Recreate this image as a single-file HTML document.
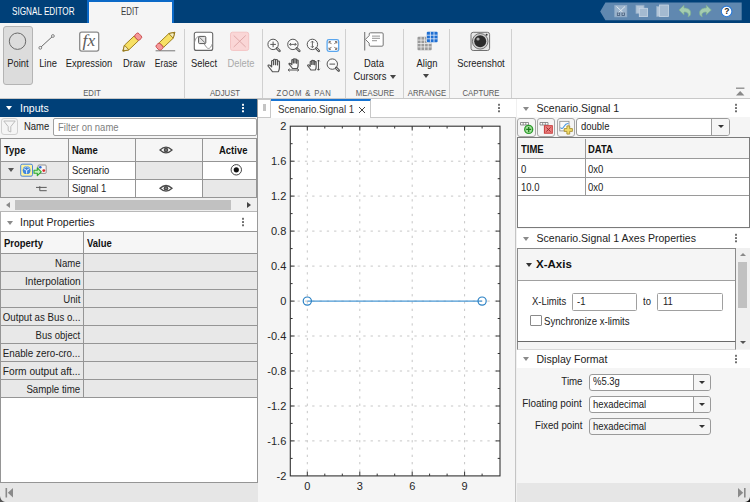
<!DOCTYPE html>
<html>
<head>
<meta charset="utf-8">
<title>Signal Editor</title>
<style>
*{box-sizing:border-box;margin:0;padding:0}
html,body{width:750px;height:502px;overflow:hidden;background:#f0f0f0}
body{font-family:"Liberation Sans",sans-serif;font-size:10px;color:#222;position:relative}
.a{position:absolute}
.t{position:absolute;white-space:nowrap;line-height:1}
/* title bar */
#titlebar{left:0;top:0;width:750px;height:22.5px;background:#004078}
#tab-se{left:12px;top:7px;font-size:10.4px;color:#fff;transform:scaleX(.785);transform-origin:left}
#tab-edit{left:86.8px;top:0;width:87px;height:23px;background:#f5f5f5;border:2.4px solid #0b69c7;border-bottom:none;border-right-width:2.8px}
#tab-edit span{left:32.6px;top:4.7px;font-size:10.4px;color:#3a3a3a;transform:scaleX(.755);transform-origin:left}
#toolstrip{left:0;top:22.5px;width:750px;height:76px;background:#f5f5f5;border-bottom:1px solid #c8c8c8}
.sep{position:absolute;top:29px;width:1px;height:68.5px;background:#d0d0d0}
.seclabel{position:absolute;top:88.6px;font-size:9px;color:#5a5a5a;white-space:nowrap;line-height:1;transform:translateX(-50%) scaleX(.86)}
.btnlabel{position:absolute;top:58.5px;font-size:10.3px;color:#222;white-space:nowrap;line-height:1;transform:translateX(-50%) scaleX(.91)}
/* panels */
.phdr{position:absolute;height:18px;background:#fff;font-size:11px;color:#222}
.phdr .ttl{position:absolute;left:20px;top:3px;white-space:nowrap;line-height:1}
.caret{position:absolute;width:0;height:0;border-left:3.5px solid transparent;border-right:3.5px solid transparent;border-top:4px solid #666}
.dots{position:absolute;width:2px;height:2px;border-radius:.5px;background:#555;box-shadow:0 4px 0 #555,0 -4px 0 #555}

.b{font-weight:bold;font-size:10.3px;color:#111}
.prow{left:0;width:255.5px;height:17.05px;background:#e8e8e8}
.prow:after{content:"";position:absolute;left:82px;top:0;width:1px;height:100%;background:#959595}
.pl{right:176.2px;top:5.3px;font-size:10.3px;color:#222}

.tb{background:#f5f5f5;border:1px solid #a8a8a8;border-radius:3px}
.sel{background:#fff;border:1px solid #9a9a9a;border-radius:3px}
.sel u{position:absolute;top:0;right:0;bottom:0;background:#f5f5f5;border-radius:0 2px 2px 0}
.sel i{position:absolute;top:0;width:1px;height:100%;background:#9a9a9a}
.sel b{position:absolute;top:6px;width:0;height:0;border-left:3px solid transparent;border-right:3px solid transparent;border-top:3.5px solid #333}
.inp{background:#fff;border:1px solid #a0a0a0;border-radius:1.5px}
.rl{right:168px;font-size:10.3px}
.s{transform:scaleX(.92);transform-origin:left}
.rl,.pl{transform:scaleX(.94);transform-origin:right}
</style>
</head>
<body>
<!-- TITLE BAR -->
<div class="a" id="titlebar"></div>
<div class="t" id="tab-se">SIGNAL EDITOR</div>
<div class="a" id="tab-edit"><span class="t">EDIT</span></div>
<div class="a" id="toolstrip"></div>
<svg class="a" style="left:595px;top:0" width="155" height="23" viewBox="595 0 155 23">
  <path d="M600.2 11.4 L605.4 2.5 H741.7 V20.3 H605.4 Z" fill="#6088b0"/>
  <g fill="#b4c6d8" stroke="#94aec8" stroke-width="0.8">
    <rect x="614.8" y="5.4" width="12" height="11.4" fill="#9cb4cc"/>
    <path d="M616.5 6.5 L624 13.5 M625 6.5 L617.5 13.5" stroke="#dfe8f0" stroke-width="1" fill="none"/>
    <rect x="617.3" y="13" width="2.4" height="2.4" fill="none" stroke="#445a78"/><rect x="622" y="13" width="2.4" height="2.4" fill="none" stroke="#445a78"/>
    <rect x="636" y="5.3" width="8" height="8"/><rect x="639.3" y="8.3" width="8.3" height="8.3" fill="#a4bad0" stroke="#c8d6e4"/>
    <rect x="656.7" y="6.5" width="8" height="10"/><rect x="659.5" y="5" width="9" height="11.5" fill="#a4bad0" stroke="#c8d6e4"/>
  </g>
  <path d="M679 10 L684 5.2 V8 C689 8 691.4 10.5 690.5 14.5 C690 16 689 16.5 688 16.8 C689.3 13.5 687.5 12 684 12 V14.8 Z" fill="#a4ccb0" stroke="#7fb090" stroke-width="0.7" stroke-linejoin="round"/>
  <path d="M711.3 10 L706.3 5.2 V8 C701.3 8 698.9 10.5 699.8 14.5 C700.3 16 701.3 16.5 702.3 16.8 C701 13.5 702.8 12 706.3 12 V14.8 Z" fill="#a4ccb0" stroke="#7fb090" stroke-width="0.7" stroke-linejoin="round"/>
  <circle cx="726.6" cy="11.4" r="5.3" fill="#fff" stroke="#2a7ad8" stroke-width="1.1"/>
</svg>
<div class="t" style="left:724.3px;top:7.2px;font-size:8.5px;font-weight:bold;color:#222">?</div>



<!-- TOOLSTRIP CONTENT -->
<div class="a" style="left:3px;top:26px;width:30px;height:59px;background:#dcdcdc;border:1px solid #b4b4b4;border-radius:3px"></div>
<svg class="a" style="left:0;top:23px" width="750" height="75" viewBox="0 23 750 75">
  <!-- point -->
  <circle cx="17.5" cy="41.2" r="8.2" fill="none" stroke="#6a6a6a" stroke-width="1"/>
  <!-- line -->
  <line x1="40.8" y1="47.2" x2="52.3" y2="36.6" stroke="#6a6a6a" stroke-width="1"/>
  <circle cx="40.3" cy="47.8" r="1.4" fill="#f5f5f5" stroke="#6a6a6a" stroke-width="0.8"/>
  <circle cx="52.9" cy="36" r="1.4" fill="#f5f5f5" stroke="#6a6a6a" stroke-width="0.8"/>
  <!-- fx box -->
  <rect x="79.7" y="32.2" width="19" height="18.9" rx="2" fill="#fff" stroke="#8a8a8a" stroke-width="1.3"/>
  <g transform="translate(122.9 51.1) rotate(-43.5)">
    <path d="M0 0 L5.2 -3.2 H18.4 V3.2 H5.2 Z" fill="#f7e064" stroke="#9a7c1c" stroke-width="0.9" stroke-linejoin="round"/>
    <path d="M0 0 L5.2 -3.2 V3.2 Z" fill="#f3ecc4" stroke="#9a7c1c" stroke-width="0.9" stroke-linejoin="round"/>
    <path d="M0.2 0 L1.8 -1 V1 Z" fill="#8a6c14"/>
    <rect x="18.4" y="-3.4" width="5.3" height="6.8" rx="1.8" fill="#f59898" stroke="#c8484c" stroke-width="0.9"/>
  </g>
  <g transform="translate(174.8 32.3) rotate(136.5)">
    <path d="M0 0 L5.2 -3.2 H18.4 V3.2 H5.2 Z" fill="#f7e064" stroke="#9a7c1c" stroke-width="0.9" stroke-linejoin="round"/>
    <path d="M0 0 L5.2 -3.2 V3.2 Z" fill="#f3ecc4" stroke="#9a7c1c" stroke-width="0.9" stroke-linejoin="round"/>
    <path d="M0.2 0 L1.8 -1 V1 Z" fill="#8a6c14"/>
    <rect x="18.4" y="-3.4" width="5.3" height="6.8" rx="1.8" fill="#f59898" stroke="#c8484c" stroke-width="0.9"/>
  </g>
  <line x1="155.6" y1="50.8" x2="175.2" y2="50.8" stroke="#777" stroke-width="1"/>
  <!-- select -->
  <rect x="194.3" y="32.2" width="18.4" height="18.2" rx="2" fill="#fff" stroke="#666" stroke-width="1.1"/>
  <path d="M194.5 42.5 C196 35.5 200 34 203.6 42.3 S210 50 212.5 43.5" fill="none" stroke="#8a8a8a" stroke-width="0.9"/>
  <rect x="198.6" y="36.4" width="7.2" height="7.2" rx="1" fill="#e4e4e4" stroke="#555" stroke-width="1"/>
  <path d="M199.5 37.3 L205 42.8" stroke="#555" stroke-width="0.8"/>
  <!-- delete -->
  <rect x="230.5" y="32.2" width="18.2" height="18.2" rx="2" fill="#fad6d6" stroke="#f3c4c4" stroke-width="1"/>
  <path d="M233.7 35.5 L245.7 47 M245.7 35.5 L233.7 47" stroke="#dba4a4" stroke-width="0.9" fill="none"/>
  <!-- zoom row 1 -->
  <g stroke="#555" fill="none" stroke-width="1"><circle cx="273.1" cy="44.4" r="5.2" fill="#fafafa"/><path d="M270.3 44.4 h5.6 M273.1 41.6 v5.6"/>
    <path d="M277.0 48.3 l2.5 2.5" stroke-width="2.6" stroke-linecap="round"/><path d="M277.40000000000003 48.699999999999996 l1.7 1.7" stroke="#f5f5f5" stroke-width="0.9" stroke-linecap="round"/></g>
  <g stroke="#555" fill="none" stroke-width="1"><circle cx="292.9" cy="44.4" r="5.2" fill="#fafafa"/><path d="M289.6 44.4 h6.6 M291 43 l-1.4 1.4 l1.4 1.4 M294.8 43 l1.4 1.4 l-1.4 1.4" stroke-width="0.9"/>
    <path d="M296.79999999999995 48.3 l2.5 2.5" stroke-width="2.6" stroke-linecap="round"/><path d="M297.2 48.699999999999996 l1.7 1.7" stroke="#f5f5f5" stroke-width="0.9" stroke-linecap="round"/></g>
  <g stroke="#555" fill="none" stroke-width="1"><circle cx="312.4" cy="44.4" r="5.2" fill="#fafafa"/><path d="M312.4 41.1 v6.6 M311 42.5 l1.4 -1.4 l1.4 1.4 M311 46.3 l1.4 1.4 l1.4 -1.4" stroke-width="0.9"/>
    <path d="M316.29999999999995 48.3 l2.5 2.5" stroke-width="2.6" stroke-linecap="round"/><path d="M316.7 48.699999999999996 l1.7 1.7" stroke="#f5f5f5" stroke-width="0.9" stroke-linecap="round"/></g>
  <rect x="327.1" y="39.7" width="11.6" height="11.6" rx="1.8" fill="#fff" stroke="#5aa6ee" stroke-width="1.3"/>
  <path d="M329.3 41.9 l2.2 2.2 M336.5 41.9 l-2.2 2.2 M329.3 49.1 l2.2 -2.2 M336.5 49.1 l-2.2 -2.2" stroke="#6a5a50" stroke-width="0.9" fill="none"/>
  <path d="M329 43.4 v-1.8 h1.8 M336.8 43.4 v-1.8 h-1.8 M329 47.6 v1.8 h1.8 M336.8 47.6 v1.8 h-1.8" stroke="#6a5a50" stroke-width="0.9" fill="none"/>
  <!-- row 2 -->
  <g transform="translate(267.6 58.6) scale(1.22 1.02)" fill="#fafafa" stroke="#555" stroke-width="1.00" stroke-linejoin="round" stroke-linecap="round">
    <path d="M4 12.8 C3 11 1.2 8.6 0.5 7.4 C0 6.4 1.2 5.7 2.1 6.7 L3.3 8.2 V2.6 C3.3 1.5 4.9 1.5 4.9 2.6 V6 V1.4 C4.9 0.3 6.5 0.3 6.5 1.4 V6 V1.7 C6.5 0.6 8.1 0.6 8.1 1.7 V6.2 V3 C8.1 2 9.7 2 9.7 3 V9 C9.7 10.8 9.2 11.8 8.8 12.8 Z"/>
  </g>
  <g transform="translate(288.6 58.2) scale(0.98 0.8)" fill="#fafafa" stroke="#555" stroke-width="1.28" stroke-linejoin="round" stroke-linecap="round">
    <path d="M4 12.8 C3 11 1.2 8.6 0.5 7.4 C0 6.4 1.2 5.7 2.1 6.7 L3.3 8.2 V2.6 C3.3 1.5 4.9 1.5 4.9 2.6 V6 V1.4 C4.9 0.3 6.5 0.3 6.5 1.4 V6 V1.7 C6.5 0.6 8.1 0.6 8.1 1.7 V6.2 V3 C8.1 2 9.7 2 9.7 3 V9 C9.7 10.8 9.2 11.8 8.8 12.8 Z"/>
  </g>
  <path d="M288.2 70 h10.6 M289.6 68.7 l-1.4 1.3 l1.4 1.3 M297.4 68.7 l1.4 1.3 l-1.4 1.3" stroke="#444" stroke-width="0.9" fill="none"/>
  <g transform="translate(307.2 59.8) scale(0.92 0.8)" fill="#fafafa" stroke="#555" stroke-width="1.28" stroke-linejoin="round" stroke-linecap="round">
    <path d="M4 12.8 C3 11 1.2 8.6 0.5 7.4 C0 6.4 1.2 5.7 2.1 6.7 L3.3 8.2 V2.6 C3.3 1.5 4.9 1.5 4.9 2.6 V6 V1.4 C4.9 0.3 6.5 0.3 6.5 1.4 V6 V1.7 C6.5 0.6 8.1 0.6 8.1 1.7 V6.2 V3 C8.1 2 9.7 2 9.7 3 V9 C9.7 10.8 9.2 11.8 8.8 12.8 Z"/>
  </g>
  <path d="M318.5 60 v10.2 M317.2 61.4 l1.3 -1.4 l1.3 1.4 M317.2 68.8 l1.3 1.4 l1.3 -1.4" stroke="#444" stroke-width="0.9" fill="none"/>
  <g stroke="#555" fill="none" stroke-width="1"><circle cx="332.3" cy="64.1" r="5.2" fill="#fafafa"/><path d="M329.5 64.1 h5.6"/>
    <path d="M336.2 68.0 l2.5 2.5" stroke-width="2.6" stroke-linecap="round"/><path d="M336.6 68.39999999999999 l1.7 1.7" stroke="#f5f5f5" stroke-width="0.9" stroke-linecap="round"/></g>
  <!-- data cursors -->
  <path d="M364.7 31.9 V50.6" stroke="#777" stroke-width="1.1"/>
  <path d="M365.4 39.4 L369.2 35.6 V34 Q369.2 32.8 370.4 32.8 H382 Q383.2 32.8 383.2 34 V45 Q383.2 46.2 382 46.2 H370.4 Q369.2 46.2 369.2 45 V43.2 Z" fill="#fff" stroke="#777" stroke-width="1" stroke-linejoin="round"/>
  <path d="M372 36.2 H380 M372 38.4 H380 M372 40.6 H377" stroke="#a8a8a8" stroke-width="1.3"/>
  <!-- align -->
  <rect x="417.5" y="36.7" width="14.2" height="13.5" rx="1" fill="#9a9a9a"/>
  <path d="M421 36.7 v13.5 M424.6 36.7 v13.5 M428.2 36.7 v13.5 M417.5 40.1 h14.2 M417.5 43.5 h14.2 M417.5 46.9 h14.2" stroke="#f0f0f0" stroke-width="0.8"/>
  <rect x="426.2" y="31.2" width="11.8" height="11.6" rx="1" fill="#f5f5f5"/>
  <rect x="426.8" y="31.7" width="10.8" height="10.6" rx="1" fill="#1f6fd2"/>
  <path d="M430.4 31.7 v10.6 M434 31.7 v10.6 M426.8 35.2 h10.8 M426.8 38.8 h10.8" stroke="#e8f0fc" stroke-width="0.8"/>
  <!-- screenshot -->
  <rect x="471" y="32.3" width="18.6" height="18.2" rx="2.2" fill="#e6e6e6" stroke="#707070" stroke-width="1"/>
  <circle cx="480.2" cy="41.3" r="7.8" fill="#d0d0d0" stroke="#666" stroke-width="0.9"/>
  <circle cx="480.2" cy="41.3" r="6" fill="#2c2c2c"/>
  <circle cx="478" cy="39" r="1.6" fill="#aaa"/>
  <circle cx="486.6" cy="34.7" r="1" fill="#333"/>
  <!-- collapse -->
  <path d="M736 88.2 h8.4" stroke="#888" stroke-width="1.3"/><path d="M736 95.5 l4.2 -4.6 l4.2 4.6 z" fill="#888"/>
</svg>
<div class="t" style="left:82.6px;top:31.6px;font-family:'Liberation Serif',serif;font-style:italic;font-size:17.5px;color:#5c5c5c">fx</div>
<div class="btnlabel" style="left:17.5px">Point</div>
<div class="btnlabel" style="left:47.5px">Line</div>
<div class="btnlabel" style="left:89px">Expression</div>
<div class="btnlabel" style="left:133.6px">Draw</div>
<div class="btnlabel" style="left:165.5px;transform:translateX(-50%) scaleX(.83)">Erase</div>
<div class="seclabel" style="left:91.5px">EDIT</div>
<div class="sep" style="left:183.5px"></div>
<div class="btnlabel" style="left:203.5px">Select</div>
<div class="btnlabel" style="left:240.5px;color:#aaa">Delete</div>
<div class="seclabel" style="left:224.5px">ADJUST</div>
<div class="sep" style="left:261.7px"></div>
<div class="seclabel" style="left:304px;letter-spacing:.7px;word-spacing:.5px">ZOOM &amp; PAN</div>
<div class="sep" style="left:344.6px"></div>
<div class="btnlabel" style="left:373.5px">Data</div>
<div class="btnlabel" style="left:370px;top:72.4px">Cursors</div>
<div class="caret" style="left:390px;top:75px;border-top-color:#444"></div>
<div class="seclabel" style="left:374.5px">MEASURE</div>
<div class="sep" style="left:403.3px"></div>
<div class="btnlabel" style="left:426.5px">Align</div>
<div class="caret" style="left:423px;top:74px;border-top-color:#444"></div>
<div class="seclabel" style="left:427px">ARRANGE</div>
<div class="sep" style="left:449.2px"></div>
<div class="btnlabel" style="left:480.5px">Screenshot</div>
<div class="seclabel" style="left:480.5px">CAPTURE</div>
<div class="sep" style="left:511.3px"></div>

<!-- LEFT PANEL -->
<div class="a" id="left" style="left:0;top:99px;width:258px;height:403px;background:#fff;border-right:1px solid #9a9a9a;border-left:1px solid #b0b0b0">
  <div class="a" style="left:-1px;top:0;width:257px;height:18px;background:#004078"></div>
  <div class="caret" style="left:5px;top:7px;border-top-color:#fff"></div>
  <div class="t" style="left:19px;top:3.8px;font-size:10.55px;color:#fff">Inputs</div>
  <div class="dots" style="left:241px;top:8px;background:#fff;box-shadow:0 3.3px 0 #fff,0 -3.3px 0 #fff"></div>
  <!-- filter row -->
  <div class="a" style="left:-1px;top:18px;width:257px;height:21px;background:#f5f5f5"></div>
  <div class="a" style="left:0px;top:19px;width:17px;height:17px;border:1px solid #d0d0d0;border-radius:3px;background:#f5f5f5"></div>
  <svg class="a" style="left:1px;top:20px" width="15" height="15" viewBox="0 0 15 15"><path d="M1.8 2 H13.2 L8.8 7.6 V13 L6.2 11.8 V7.6 Z" fill="none" stroke="#bcbcbc" stroke-width="1" stroke-linejoin="round"/></svg>
  <div class="t s" style="left:23px;top:23px;font-size:10.3px">Name</div>
  <div class="a" style="left:52px;top:19px;width:203.7px;height:17.5px;background:#fff;border:1px solid #a0a0a0;border-radius:2px"></div>
  <div class="t s" style="left:57px;top:23.5px;font-size:10.3px;color:#808080">Filter on name</div>
  <!-- table -->
  <div class="a" style="left:-1px;top:39px;width:257px;height:60px;background:#959595"></div>
  <div class="a" style="left:0;top:40px;width:66.5px;height:21.5px;background:#f6f6f6"></div>
  <div class="a" style="left:67.5px;top:40px;width:66.8px;height:21.5px;background:#f6f6f6"></div>
  <div class="a" style="left:135.3px;top:40px;width:65.9px;height:21.5px;background:#f6f6f6"></div>
  <div class="a" style="left:202.2px;top:40px;width:53.3px;height:21.5px;background:#f6f6f6"></div>
  <div class="a" style="left:0;top:62.5px;width:66.5px;height:17px;background:#e8e8e8"></div>
  <div class="a" style="left:67.5px;top:62.5px;width:66.8px;height:17px;background:#fff"></div>
  <div class="a" style="left:135.3px;top:62.5px;width:65.9px;height:17px;background:#e8e8e8"></div>
  <div class="a" style="left:202.2px;top:62.5px;width:53.3px;height:17px;background:#fff"></div>
  <div class="a" style="left:0;top:80.5px;width:66.5px;height:17.5px;background:#e8e8e8"></div>
  <div class="a" style="left:67.5px;top:80.5px;width:66.8px;height:17.5px;background:#fff"></div>
  <div class="a" style="left:135.3px;top:80.5px;width:65.9px;height:17.5px;background:#fff"></div>
  <div class="a" style="left:202.2px;top:80.5px;width:53.3px;height:17.5px;background:#e8e8e8"></div>
  <div class="t b s" style="left:3px;top:46.8px">Type</div>
  <div class="t b s" style="left:71px;top:46.8px">Name</div>
  <div class="t b s" style="left:218px;top:46.8px">Active</div>
  <div class="t s" style="left:71px;top:67.3px;font-size:10.3px">Scenario</div>
  <div class="t s" style="left:71px;top:85.2px;font-size:10.3px">Signal 1</div>
  <div class="caret" style="left:6.5px;top:69px;border-top-color:#555"></div>
  <svg class="a" style="left:-1px;top:40px" width="257" height="59" viewBox="0 139 257 59">
    <g id="eye"><path d="M160 150 Q166 144.3 172 150 Q166 155.7 160 150 Z" fill="#fff" stroke="#4a4a4a" stroke-width="1.3"/><circle cx="166" cy="150" r="2.3" fill="#4a4a4a"/><circle cx="166" cy="150" r="0.8" fill="#999"/></g>
    <use href="#eye" y="38.3"/>
    <circle cx="236.3" cy="169.8" r="5.2" fill="#fff" stroke="#444" stroke-width="1"/><circle cx="236.3" cy="169.8" r="2.6" fill="#111"/>
    <!-- scenario icons -->
    <rect x="20.7" y="164.2" width="11.8" height="12" rx="1.5" fill="#fdf3a0" stroke="#4a86d8" stroke-width="1"/>
    <circle cx="26.6" cy="170.2" r="3.9" fill="#3f86dc"/>
    <path d="M23.6 168.6 L26.6 170.4 L29.6 168.6 M26.6 170.4 V173.6" stroke="#e8f2ff" stroke-width="1" fill="none"/>
    <path d="M24.6 167.6 L26.6 166.8 L28.6 167.6" stroke="#cfe2fa" stroke-width="0.8" fill="none"/>
    <rect x="38" y="165" width="8.2" height="8.4" rx="1" fill="#f6f6f6" stroke="#7a7a7a" stroke-width="0.8"/>
    <circle cx="40.3" cy="167.3" r="1.3" fill="#2a6ad8"/><circle cx="43.8" cy="170.6" r="1.4" fill="#d82828"/>
    <path d="M34 170.3 H37.3 V167.9 L41.3 171.8 L37.3 175.7 V173.3 H34 Z" fill="#c4f0bc" stroke="#2fa82f" stroke-width="1.1" stroke-linejoin="round"/>
    <!-- signal icon -->
    <path d="M36 187.4 H46.7 M39.8 186.2 V190.7 H46.7" fill="none" stroke="#5a5a5a" stroke-width="1"/>
  </svg>
  <!-- scrollbar -->
  <div class="a" style="left:-1px;top:98.5px;width:257px;height:14px;background:#f0f0f0;border-bottom:1px solid #b8b8b8"></div>
  <div class="a" style="left:14px;top:100.5px;width:215.5px;height:10px;background:#c1c1c1"></div>
  <div class="a" style="left:5px;top:102.5px;width:0;height:0;border-top:3px solid transparent;border-bottom:3px solid transparent;border-right:4px solid #8a8a8a"></div>
  <div class="a" style="left:246px;top:102.5px;width:0;height:0;border-top:3px solid transparent;border-bottom:3px solid transparent;border-left:4px solid #444"></div>
  <!-- Input properties -->
  <div class="caret" style="left:5.5px;top:121.5px;border-top-color:#8a8a8a"></div>
  <div class="t" style="left:19px;top:118px;font-size:10.55px">Input Properties</div>
  <div class="dots" style="left:241px;top:122px;background:#6c6c6c;box-shadow:0 3.3px 0 #6c6c6c,0 -3.3px 0 #6c6c6c"></div>
  <div class="a" style="left:-1px;top:132px;width:257px;height:167.10px;background:#959595"></div>
  <div class="a" style="left:-1px;top:299.10px;width:257.6px;height:84.90px;background:#fff;border:1px solid #959595;border-top:none"></div>
  <div class="a" style="left:0;top:133px;width:82px;height:20.7px;background:#f6f6f6"></div>
  <div class="a" style="left:83px;top:133px;width:172.5px;height:20.7px;background:#f6f6f6"></div>
  <div class="t b s" style="left:3px;top:140px">Property</div>
  <div class="t b s" style="left:85.5px;top:140px">Value</div>
  
<div class="a prow" style="top:154.70px"><span class="t pl" style="transform:scaleX(0.926)">Name</span></div>
<div class="a prow" style="top:172.75px"><span class="t pl" style="transform:scaleX(0.983)">Interpolation</span></div>
<div class="a prow" style="top:190.80px"><span class="t pl" style="transform:scaleX(0.93)">Unit</span></div>
<div class="a prow" style="top:208.85px"><span class="t pl" style="transform:scaleX(0.942)">Output as Bus o...</span></div>
<div class="a prow" style="top:226.90px"><span class="t pl" style="transform:scaleX(0.925)">Bus object</span></div>
<div class="a prow" style="top:244.95px"><span class="t pl" style="transform:scaleX(0.955)">Enable zero-cro...</span></div>
<div class="a prow" style="top:263.00px"><span class="t pl" style="transform:scaleX(0.99)">Form output aft...</span></div>
<div class="a prow" style="top:281.05px"><span class="t pl" style="transform:scaleX(0.941)">Sample time</span></div>
  
  <div class="a" style="left:-1px;top:384px;width:259px;height:19px;background:#e6e6e6"></div>
  <svg class="a" style="left:3.2px;top:388.2px" width="12" height="12" viewBox="0 0 12 12"><rect x="1.5" y="1" width="1.6" height="9.5" fill="#8a8a8a"/><path d="M9 1 V10.5 L3.8 5.750 Z" fill="#8a8a8a"/></svg>
</div>
<!-- CENTER -->
<div class="a" id="center" style="left:258px;top:99px;width:258px;height:403px;background:#f5f5f5;border-right:1px solid #c4c4c4">
  <div class="a" style="left:0;top:0;width:258px;height:18.5px;background:#fff;border-bottom:1px solid #c8c8c8"></div>
  <div class="a" style="left:0;top:-0.5px;width:13px;height:19px;background:#fff;border:1px solid #c8c8c8;border-left:none"></div>
  <div class="a" style="left:5px;top:5px;width:3px;height:7px;background:#c4c4c4"></div>
  <div class="a" style="left:13px;top:-0.5px;width:100px;height:19.5px;background:#fff;border-top:2.5px solid #1874d2;border-right:1px solid #c8c8c8"></div>
  <div class="t" id="tabtitle" style="left:19.5px;top:5.7px;font-size:10.4px;color:#333;transform:scaleX(.935);transform-origin:left">Scenario.Signal 1</div>
  <svg class="a" style="left:100px;top:7px" width="8" height="8" viewBox="0 0 8 8"><path d="M1 1 L7 7 M7 1 L1 7" stroke="#444" stroke-width="1"/></svg>
  <div class="dots" style="left:239.5px;top:8px;background:#6c6c6c;box-shadow:0 3.3px 0 #6c6c6c,0 -3.3px 0 #6c6c6c"></div>
</div>
<svg class="a" id="plot" style="left:258px;top:118px" width="258" height="384" viewBox="258 118 258 384" font-family="Liberation Sans, sans-serif" font-size="11" fill="#262626">
<rect x="290.3" y="126.2" width="209.7" height="349.7" fill="#fff"/>
<path d="M307.3 126.2 V475.9 M359.8 126.2 V475.9 M412.2 126.2 V475.9 M464.6 126.2 V475.9 M290.3 440.9 H500.0 M290.3 406.0 H500.0 M290.3 371.0 H500.0 M290.3 336.0 H500.0 M290.3 301.1 H500.0 M290.3 266.1 H500.0 M290.3 231.1 H500.0 M290.3 196.1 H500.0 M290.3 161.2 H500.0" stroke="#c6c6c6" stroke-width="1" stroke-dasharray="2.3 5" fill="none"/>
<path d="M307.3 475.9 v-4.3 M307.3 126.2 v4.3 M324.8 475.9 v-2.3 M324.8 126.2 v2.3 M342.3 475.9 v-2.3 M342.3 126.2 v2.3 M359.8 475.9 v-4.3 M359.8 126.2 v4.3 M377.2 475.9 v-2.3 M377.2 126.2 v2.3 M394.7 475.9 v-2.3 M394.7 126.2 v2.3 M412.2 475.9 v-4.3 M412.2 126.2 v4.3 M429.6 475.9 v-2.3 M429.6 126.2 v2.3 M447.1 475.9 v-2.3 M447.1 126.2 v2.3 M464.6 475.9 v-4.3 M464.6 126.2 v4.3 M482.1 475.9 v-2.3 M482.1 126.2 v2.3 M290.3 458.4 h2.3 M500.0 458.4 h-2.3 M290.3 440.9 h4.3 M500.0 440.9 h-4.3 M290.3 423.4 h2.3 M500.0 423.4 h-2.3 M290.3 406.0 h4.3 M500.0 406.0 h-4.3 M290.3 388.5 h2.3 M500.0 388.5 h-2.3 M290.3 371.0 h4.3 M500.0 371.0 h-4.3 M290.3 353.5 h2.3 M500.0 353.5 h-2.3 M290.3 336.0 h4.3 M500.0 336.0 h-4.3 M290.3 318.5 h2.3 M500.0 318.5 h-2.3 M290.3 301.1 h4.3 M500.0 301.1 h-4.3 M290.3 283.6 h2.3 M500.0 283.6 h-2.3 M290.3 266.1 h4.3 M500.0 266.1 h-4.3 M290.3 248.6 h2.3 M500.0 248.6 h-2.3 M290.3 231.1 h4.3 M500.0 231.1 h-4.3 M290.3 213.6 h2.3 M500.0 213.6 h-2.3 M290.3 196.1 h4.3 M500.0 196.1 h-4.3 M290.3 178.7 h2.3 M500.0 178.7 h-2.3 M290.3 161.2 h4.3 M500.0 161.2 h-4.3 M290.3 143.7 h2.3 M500.0 143.7 h-2.3" stroke="#333" stroke-width="1" fill="none"/>
<rect x="290.3" y="126.2" width="209.7" height="349.7" fill="none" stroke="#333" stroke-width="1.1"/>
<line x1="307.3" y1="301.1" x2="482.1" y2="301.1" stroke="#4a98d4" stroke-width="1.3"/>
<circle cx="307.3" cy="301.1" r="4.1" fill="none" stroke="#2a80c4" stroke-width="1.2"/>
<circle cx="482.1" cy="301.1" r="4.1" fill="none" stroke="#2a80c4" stroke-width="1.2"/>
<text x="286.3" y="479.8" text-anchor="end">-2</text>
<text x="286.3" y="444.8" text-anchor="end">-1.6</text>
<text x="286.3" y="409.9" text-anchor="end">-1.2</text>
<text x="286.3" y="374.9" text-anchor="end">-0.8</text>
<text x="286.3" y="339.9" text-anchor="end">-0.4</text>
<text x="286.3" y="304.9" text-anchor="end">0</text>
<text x="286.3" y="270.0" text-anchor="end">0.4</text>
<text x="286.3" y="235.0" text-anchor="end">0.8</text>
<text x="286.3" y="200.0" text-anchor="end">1.2</text>
<text x="286.3" y="165.1" text-anchor="end">1.6</text>
<text x="286.3" y="130.1" text-anchor="end">2</text>
<text x="307.3" y="490" text-anchor="middle">0</text>
<text x="359.8" y="490" text-anchor="middle">3</text>
<text x="412.2" y="490" text-anchor="middle">6</text>
<text x="464.6" y="490" text-anchor="middle">9</text>
</svg>
<!-- RIGHT -->
<div class="a" id="right" style="left:517px;top:99px;width:233px;height:403px;background:#f5f5f5">
  <div class="a" style="left:0;top:0;width:233px;height:18px;background:#fff"></div>
  <div class="caret" style="left:6px;top:8px;border-top-color:#8a8a8a"></div>
  <div class="t" style="left:19.5px;top:4px;font-size:10.55px">Scenario.Signal 1</div>
  <div class="dots" style="left:217.5px;top:8px;background:#6c6c6c;box-shadow:0 3.3px 0 #6c6c6c,0 -3.3px 0 #6c6c6c"></div>

  <!-- toolbar -->
  <div class="a tb" style="left:0px;top:19px;width:18.5px;height:18.5px"></div>
  <div class="a tb" style="left:20.2px;top:19px;width:18px;height:18.5px"></div>
  <div class="a tb" style="left:40px;top:19px;width:18px;height:18.5px"></div>
  <div class="a sel" style="left:59px;top:19px;width:153.5px;height:18px"><u style="left:135px"></u><i style="left:134px"></i><b style="left:140.5px"></b></div>
  <div class="t s" style="left:63.5px;top:23px;font-size:10.3px">double</div>
  <svg class="a" style="left:0;top:19px" width="60" height="19" viewBox="517 118 60 19">
    <!-- add row -->
    <path d="M520.5 122.5 h8 v2.5 h-8 z M523.2 122.5 v2.5 M525.8 122.5 v2.5" fill="#fff" stroke="#777" stroke-width="0.8"/>
    <circle cx="528.7" cy="129.4" r="4" fill="#a4e09c" stroke="#2a9a2a" stroke-width="1.3"/>
    <path d="M526.2 129.4 h5 M528.7 126.9 v5" stroke="#1a7a1a" stroke-width="1.2"/>
    <!-- delete row -->
    <path d="M540 122.5 h8 v2.5 h-8 z M542.7 122.5 v2.5 M545.3 122.5 v2.5" fill="#fff" stroke="#777" stroke-width="0.8"/>
    <rect x="544.4" y="125.7" width="7.9" height="7.5" fill="#ea8080" stroke="#c83838" stroke-width="1"/>
    <path d="M546.3 127.4 l4.2 4.2 M550.5 127.4 l-4.2 4.2" stroke="#a02828" stroke-width="1"/>
    <!-- replace -->
    <rect x="559.8" y="121.3" width="9.2" height="9.6" fill="#fafafa" stroke="#888" stroke-width="0.8"/>
    <path d="M560.5 127.5 q1.5 2.5 3.5 -1 t4.5 -3" fill="none" stroke="#4a98e0" stroke-width="1.1"/>
    <path d="M566.9 125.9 h2.8 v2.7 h2.7 v2.8 h-2.7 v2.7 h-2.8 v-2.7 h-2.7 v-2.8 h2.7 z" fill="#f2dc6a" stroke="#a89030" stroke-width="0.9" stroke-linejoin="round"/>
  </svg>
  <!-- data table -->
  <div class="a" style="left:-0.5px;top:38.3px;width:233.2px;height:91.2px;background:#fff;border:1px solid #7a7a7a"></div>
  <div class="a" style="left:0.5px;top:39.3px;width:231.2px;height:21.2px;background:#f5f5f5;border-bottom:1px solid #9a9a9a"></div>
  <div class="a" style="left:0.5px;top:78.2px;width:231.2px;height:1px;background:#9a9a9a"></div>
  <div class="a" style="left:0.5px;top:96.1px;width:231.2px;height:1px;background:#9a9a9a"></div>
  <div class="a" style="left:67.5px;top:39.5px;width:1px;height:57px;background:#9a9a9a"></div>
  <div class="t b s" style="left:3.5px;top:46px">TIME</div>
  <div class="t b s" style="left:71px;top:46px">DATA</div>
  <div class="t s" style="left:3.5px;top:65.5px;font-size:10.3px">0</div>
  <div class="t s" style="left:71px;top:65.5px;font-size:10.3px">0x0</div>
  <div class="t s" style="left:3.5px;top:83.5px;font-size:10.3px">10.0</div>
  <div class="t s" style="left:71px;top:83.5px;font-size:10.3px">0x0</div>
  <!-- axes properties -->
  <div class="a" style="left:0;top:130px;width:233px;height:18.5px;background:#fff"></div>
  <div class="caret" style="left:6px;top:137.5px;border-top-color:#8a8a8a"></div>
  <div class="t" style="left:19.5px;top:133.5px;font-size:10.55px">Scenario.Signal 1 Axes Properties</div>
  <div class="dots" style="left:217.5px;top:138px;background:#6c6c6c;box-shadow:0 3.3px 0 #6c6c6c,0 -3.3px 0 #6c6c6c"></div>
  <div class="a" style="left:-0.5px;top:148.5px;width:219px;height:94.7px;background:#fff;border:1px solid #8a8a8a;border-bottom:1.4px solid #6a6a6a"></div>
  <div class="a" style="left:0.5px;top:149.5px;width:217px;height:32px;background:#f5f5f5;border-bottom:1px solid #a0a0a0"></div>
  <div class="a" style="left:-0.5px;top:243px;width:219px;height:7.7px;background:#f5f5f5;border-left:1px solid #8a8a8a;border-right:1px solid #8a8a8a;border-bottom:1px solid #d8d8d8"></div>
  <div class="caret" style="left:8.5px;top:163.5px;border-top-color:#333"></div>
  <div class="t" style="left:19px;top:159.5px;font-size:11.5px;font-weight:bold;color:#111">X-Axis</div>
  <div class="t s" style="left:14.5px;top:198px;font-size:10.3px">X-Limits</div>
  <div class="a inp" style="left:55px;top:194px;width:65px;height:17.5px"></div>
  <div class="t s" style="left:59.5px;top:198px;font-size:10.3px">-1</div>
  <div class="t s" style="left:126px;top:197.5px;font-size:10.3px">to</div>
  <div class="a inp" style="left:140px;top:194px;width:66px;height:17.5px"></div>
  <div class="t s" style="left:146px;top:198px;font-size:10.3px">11</div>
  <div class="a" style="left:13px;top:215.8px;width:11.5px;height:11.5px;background:#fff;border:1px solid #8a8a8a;border-radius:1px"></div>
  <div class="t s" style="left:27px;top:218.2px;font-size:10.3px;transform:scaleX(.935)">Synchronize x-limits</div>
  <!-- v scrollbar -->
  <div class="a" style="left:218.5px;top:148.5px;width:14.5px;height:101px;background:#f0f0f0"></div>
  <div class="a" style="left:221.3px;top:162.5px;width:9.2px;height:46px;background:#c1c1c1"></div>
  <div class="a" style="left:223px;top:154px;width:0;height:0;border-left:3px solid transparent;border-right:3px solid transparent;border-bottom:3.5px solid #8a8a8a"></div>
  <div class="a" style="left:223px;top:241.5px;width:0;height:0;border-left:3px solid transparent;border-right:3px solid transparent;border-top:3.5px solid #555"></div>
  <!-- display format -->
  <div class="a" style="left:0;top:250.5px;width:233px;height:18.5px;background:#fff"></div>
  <div class="caret" style="left:6px;top:258px;border-top-color:#8a8a8a"></div>
  <div class="t" style="left:19.5px;top:254.5px;font-size:10.55px">Display Format</div>
  <div class="dots" style="left:217.5px;top:259px;background:#6c6c6c;box-shadow:0 3.3px 0 #6c6c6c,0 -3.3px 0 #6c6c6c"></div>
  <div class="t rl" style="top:278px">Time</div>
  <div class="t rl" style="top:300.2px;transform:scaleX(.965)">Floating point</div>
  <div class="t rl" style="top:322px">Fixed point</div>
  <div class="a sel" style="left:72px;top:274.5px;width:122px;height:17px"><u style="left:103.5px"></u><i style="left:102.5px"></i><b style="left:108.5px"></b></div>
  <div class="a sel" style="left:72px;top:296.5px;width:122px;height:17px"><u style="left:103.5px"></u><i style="left:102.5px"></i><b style="left:108.5px"></b></div>
  <div class="a sel" style="left:72px;top:318.5px;width:122px;height:17px;background:#f5f5f5"><b style="left:108.5px"></b></div>
  <div class="t s" style="left:76px;top:278px;font-size:10.3px">%5.3g</div>
  <div class="t s" style="left:76px;top:300.5px;font-size:10.3px">hexadecimal</div>
  <div class="t s" style="left:76px;top:322.5px;font-size:10.3px">hexadecimal</div>
  <!-- bottom bar -->
  <div class="a" style="left:0;top:384px;width:233px;height:19px;background:#e6e6e6"></div>
  <svg class="a" style="left:218.6px;top:388.3px" width="12" height="12" viewBox="0 0 12 12"><rect x="8" y="1" width="1.6" height="9.5" fill="#8a8a8a"/><path d="M2 1 V10.5 L7.2 5.750 Z" fill="#8a8a8a"/></svg>
</div>
<svg class="a" style="left:0;top:494px" width="8" height="8" viewBox="0 0 8 8"><path d="M0 2 Q0.5 7 5 8 H0 Z" fill="#555"/></svg>
<svg class="a" style="left:742px;top:494px" width="8" height="8" viewBox="0 0 8 8"><path d="M8 3 Q7.5 7.5 3 8 H8 Z" fill="#111"/></svg>
</body>
</html>
